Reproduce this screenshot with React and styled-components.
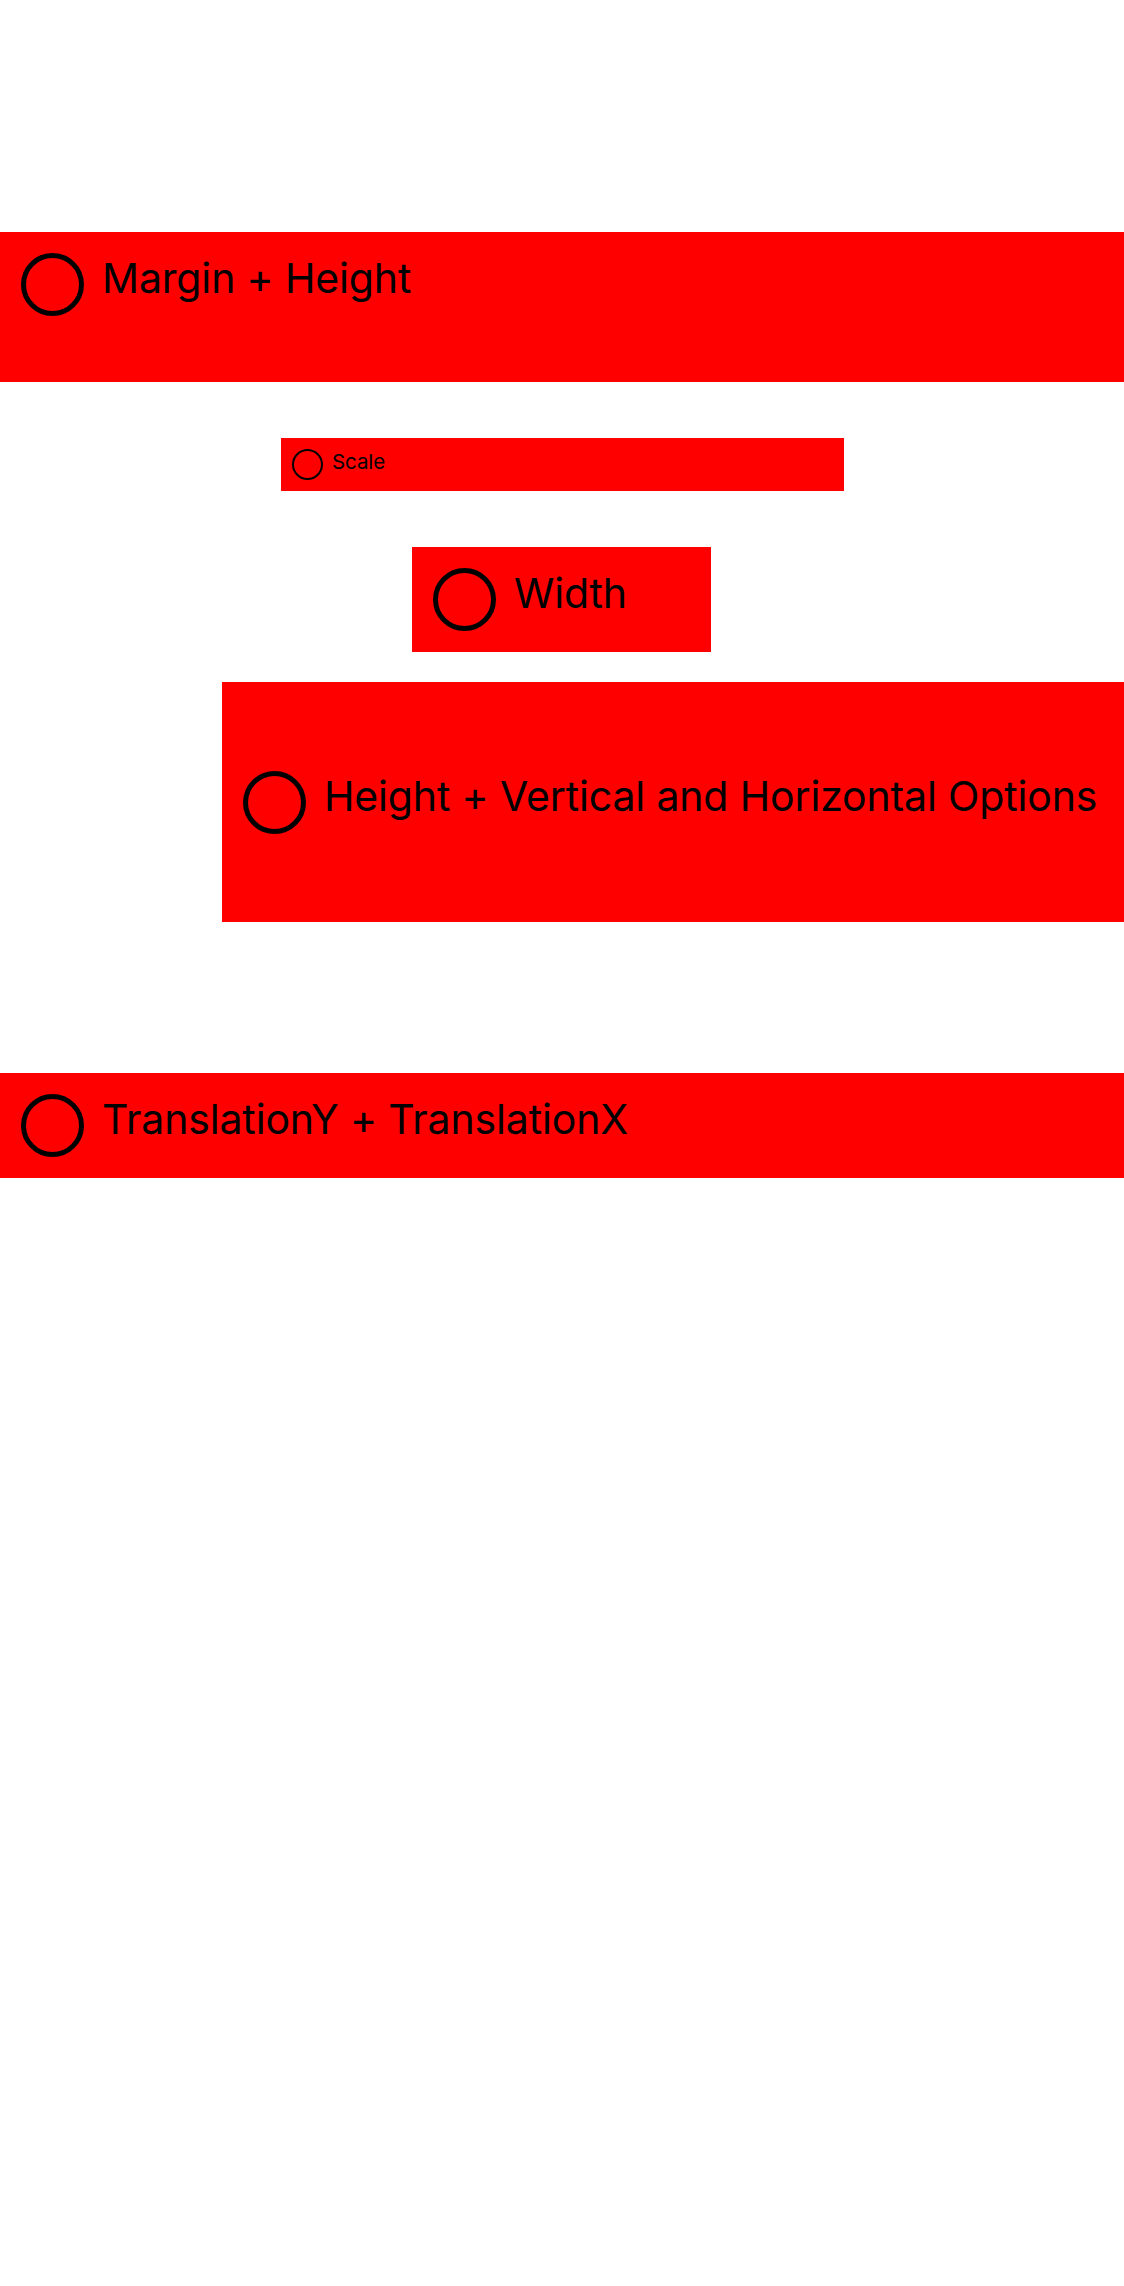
import React from "react";
import styled, { createGlobalStyle } from "styled-components";

const Global = createGlobalStyle`
  html, body { margin: 0; padding: 0; background: #ffffff; }
  body { font-family: Inter, "Noto Sans", "Liberation Sans", sans-serif; color: #000; }
`;

const Page = styled.div`
  display: flex;
  flex-direction: column;
  width: 1124px;
  min-height: 2286px;
  padding-top: 232px;
  box-sizing: border-box;
`;

const Band = styled.div`
  display: flex;
  align-items: ${(p) => p.$align || "flex-start"};
  box-sizing: border-box;
  background: #ff0000;
  width: ${(p) => p.$width || "100%"};
  height: ${(p) => p.$height}px;
  padding: ${(p) => p.$pad}px;
  margin-top: ${(p) => p.$top || 0}px;
  align-self: ${(p) => p.$self || "stretch"};
  margin-left: ${(p) => p.$left || 0}px;
`;

const Row = styled.div`
  display: flex;
  align-items: flex-start;
  gap: ${(p) => p.$gap}px;
`;

const Ring = styled.div`
  flex: none;
  box-sizing: border-box;
  width: ${(p) => p.$size}px;
  height: ${(p) => p.$size}px;
  border-radius: 50%;
  border: ${(p) => p.$stroke}px solid #000;
`;

const Label = styled.span`
  font-size: ${(p) => p.$size}px;
  line-height: ${(p) => p.$lh}px;
  font-weight: 400;
  white-space: nowrap;
  letter-spacing: ${(p) => p.$ls || 0}px;
`;

function Item({ text, scale = 1 }) {
  return (
    <Row $gap={18 * scale}>
      <Ring $size={63 * scale} $stroke={5 * scale} />
      <Label $size={41 * scale} $lh={50 * scale} $ls={-0.15 * scale}>
        {text}
      </Label>
    </Row>
  );
}

export default function App() {
  return (
    <>
      <Global />
      <Page>
        <Band $height={150} $pad={21}>
          <Item text="Margin + Height" />
        </Band>
        <Band $height={53} $pad={10.5} $width="563px" $self="flex-start" $left={281} $top={56}>
          <Item text="Scale" scale={0.5} />
        </Band>
        <Band $height={105} $pad={21} $width="299px" $self="flex-start" $left={412} $top={56}>
          <Item text="Width" />
        </Band>
        <Band $height={240} $pad={21} $width="902px" $self="flex-start" $left={222} $top={30} $align="center">
          <Item text="Height + Vertical and Horizontal Options" />
        </Band>
        <Band $height={105} $pad={21} $top={151}>
          <Item text="TranslationY + TranslationX" />
        </Band>
      </Page>
    </>
  );
}
